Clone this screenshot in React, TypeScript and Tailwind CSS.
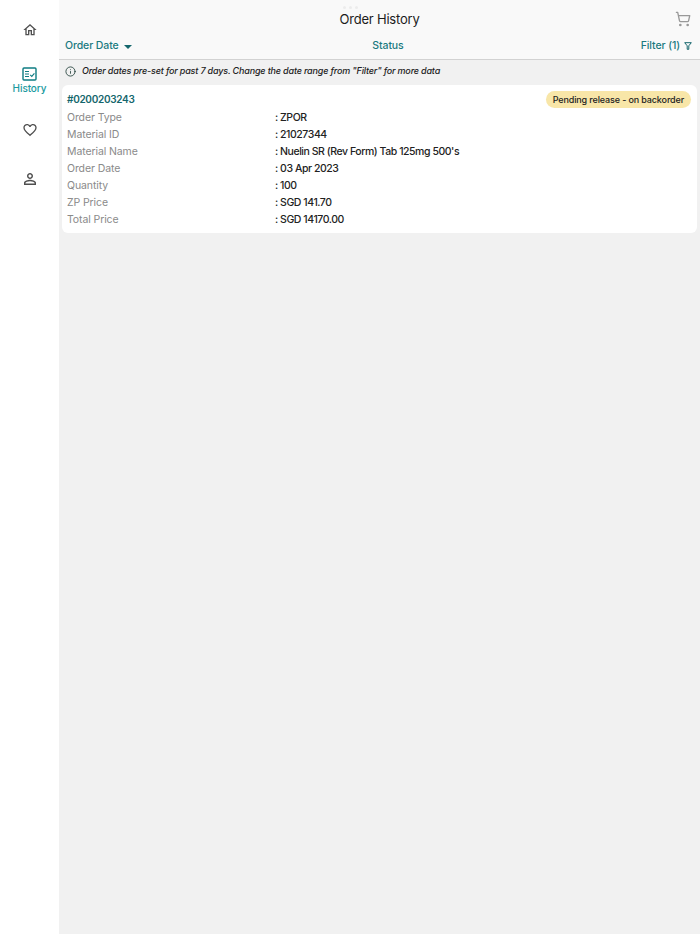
import React from "react"
import { ShoppingCart, Info } from "lucide-react"

const rows = [
  ["Order Type", "ZPOR"],
  ["Material ID", "21027344"],
  ["Material Name", "Nuelin SR (Rev Form) Tab 125mg 500's"],
  ["Order Date", "03 Apr 2023"],
  ["Quantity", "100"],
  ["ZP Price", "SGD 141.70"],
  ["Total Price", "SGD 14170.00"],
]

function HomeIcon() {
  return (
    <svg width="16" height="16" viewBox="0 0 24 24" fill="#4f4f4f">
      <path d="M12 5.69l5 4.5V18h-2v-6H9v6H7v-7.81l5-4.5M12 3L2 12h3v8h6v-6h2v6h6v-8h3L12 3z" />
    </svg>
  )
}

function HeartIcon() {
  return (
    <svg width="16" height="16" viewBox="0 0 24 24" fill="#4f4f4f">
      <path d="M16.5 3c-1.74 0-3.41.81-4.5 2.09C10.91 3.81 9.24 3 7.5 3 4.42 3 2 5.42 2 8.5c0 3.78 3.4 6.86 8.55 11.54L12 21.35l1.45-1.32C18.6 15.36 22 12.28 22 8.5 22 5.42 19.58 3 16.5 3zm-4.4 15.55l-.1.1-.1-.1C7.14 14.24 4 11.39 4 8.5 4 6.5 5.5 5 7.5 5c1.54 0 3.04.99 3.57 2.36h1.87C13.46 5.99 14.96 5 16.5 5c2 0 3.5 1.5 3.5 3.5 0 2.89-3.14 5.74-7.9 10.05z" />
    </svg>
  )
}

function PersonIcon() {
  return (
    <svg width="18" height="18" viewBox="0 0 24 24" fill="#4f4f4f">
      <path d="M12 5.9c1.16 0 2.1.94 2.1 2.1s-.94 2.1-2.1 2.1S9.9 9.16 9.9 8s.94-2.1 2.1-2.1m0 9c2.97 0 6.1 1.46 6.1 2.1v1.1H5.9V17c0-.64 3.13-2.1 6.1-2.1M12 4C9.79 4 8 5.79 8 8s1.79 4 4 4 4-1.79 4-4-1.79-4-4-4zm0 9c-2.67 0-8 1.34-8 4v3h16v-3c0-2.66-5.33-4-8-4z" />
    </svg>
  )
}

function HistoryIcon() {
  return (
    <svg width="15" height="14" viewBox="0 0 15 14" fill="none" stroke="#0e7c82" strokeWidth="1.4">
      <rect x="1" y="1" width="13" height="12" rx="1" />
      <path d="M3 4.5h4M3 7h4M3 9.5h4" strokeWidth="1" />
      <path d="M8.2 7.8l1.6 1.6 2.6-3" strokeWidth="1.1" />
    </svg>
  )
}

export default function App() {
  return (
    <div className="relative flex h-[934px] w-[700px] overflow-hidden bg-[#f1f1f1] font-['Inter',sans-serif]">
      {/* SIDEBAR */}
      <div className="flex w-[59px] shrink-0 flex-col items-center bg-white pt-[22px]">
        <HomeIcon />
        <div className="mt-[29px] flex flex-col items-center">
          <HistoryIcon />
          <span className="text-[10px] font-medium leading-[14px] tracking-[-0.1px] text-[#1a9aa0]">History</span>
        </div>
        <div className="mt-[27px] flex">
          <HeartIcon />
        </div>
        <div className="mt-[32px] flex">
          <PersonIcon />
        </div>
      </div>

      <div className="flex min-w-0 flex-1 flex-col">
        {/* HEADER */}
        <div className="h-[60px] border-b border-[#d2d2d2] bg-[#f9f9f9]">
          <div className="relative flex h-[38px] items-center justify-center">
            <div className="absolute left-[284px] top-[6px] flex gap-[3px]">
              <span className="h-[3px] w-[3px] rounded-full bg-[#ececec]" />
              <span className="h-[3px] w-[3px] rounded-full bg-[#ececec]" />
              <span className="h-[3px] w-[3px] rounded-full bg-[#ececec]" />
            </div>
            <h1 className="text-[13px] leading-[38px] tracking-[-0.2px] text-[#1c1c1c]">Order History</h1>
            <ShoppingCart className="absolute right-[9px] top-[11px] h-[16px] w-[16px] text-[#999]" strokeWidth={2} />
          </div>
          <div className="grid grid-cols-3 items-center pl-[6px] pr-[8px] text-[10.5px] font-medium leading-[16px] tracking-[-0.1px] text-[#1b7a80]">
            <div className="flex items-center gap-[5px]">
              <span>Order Date</span>
              <span className="mt-[1px] h-0 w-0 border-x-[4px] border-t-[4px] border-x-transparent border-t-[#14666c]" />
            </div>
            <div className="pl-[19px] text-center">Status</div>
            <div className="flex items-center justify-end gap-[4px]">
              <span>Filter (1)</span>
              <svg width="8" height="8" viewBox="0 0 8 8" fill="none" stroke="#14666c" strokeWidth="1">
                <path d="M0.7 0.7h6.6L4.8 3.8V7.3H3.2V3.8z" />
              </svg>
            </div>
          </div>
        </div>

        {/* AVISO */}
        <div className="flex h-[22px] items-center gap-[6px] px-[6px]">
          <Info className="h-[11px] w-[11px] text-[#1c3a34]" strokeWidth={1.8} />
          <p className="text-[9px] font-medium italic tracking-[-0.17px] text-[#222]">
            Order dates pre-set for past 7 days. Change the date range from "Filter" for more data
          </p>
        </div>

        {/* TARJETA */}
        <div className="mx-[3px] mt-[3px] rounded-[6px] bg-white pb-[5px] pl-[5px] pr-[6px] pt-[6px]">
          <div className="mb-[1px] flex h-[17px] items-center justify-between">
            <span className="text-[10px] font-semibold tracking-[-0.3px] text-[#14666c]">#0200203243</span>
            <span className="rounded-full bg-[#f8e6a8] px-[7px] py-[2px] text-[9px] font-medium leading-[13px] tracking-[-0.13px] text-[#222]">
              Pending release - on backorder
            </span>
          </div>
          <div>
            {rows.map(([label, value]) => (
              <div key={label} className="flex h-[17px] items-center text-[10.5px] leading-[17px]">
                <span className="w-[208px] shrink-0 tracking-[-0.1px] text-[#8a8a8a]">{label}</span>
                <span className="font-medium tracking-[-0.45px] text-[#222]">: {value}</span>
              </div>
            ))}
          </div>
        </div>
      </div>
    </div>
  )
}
